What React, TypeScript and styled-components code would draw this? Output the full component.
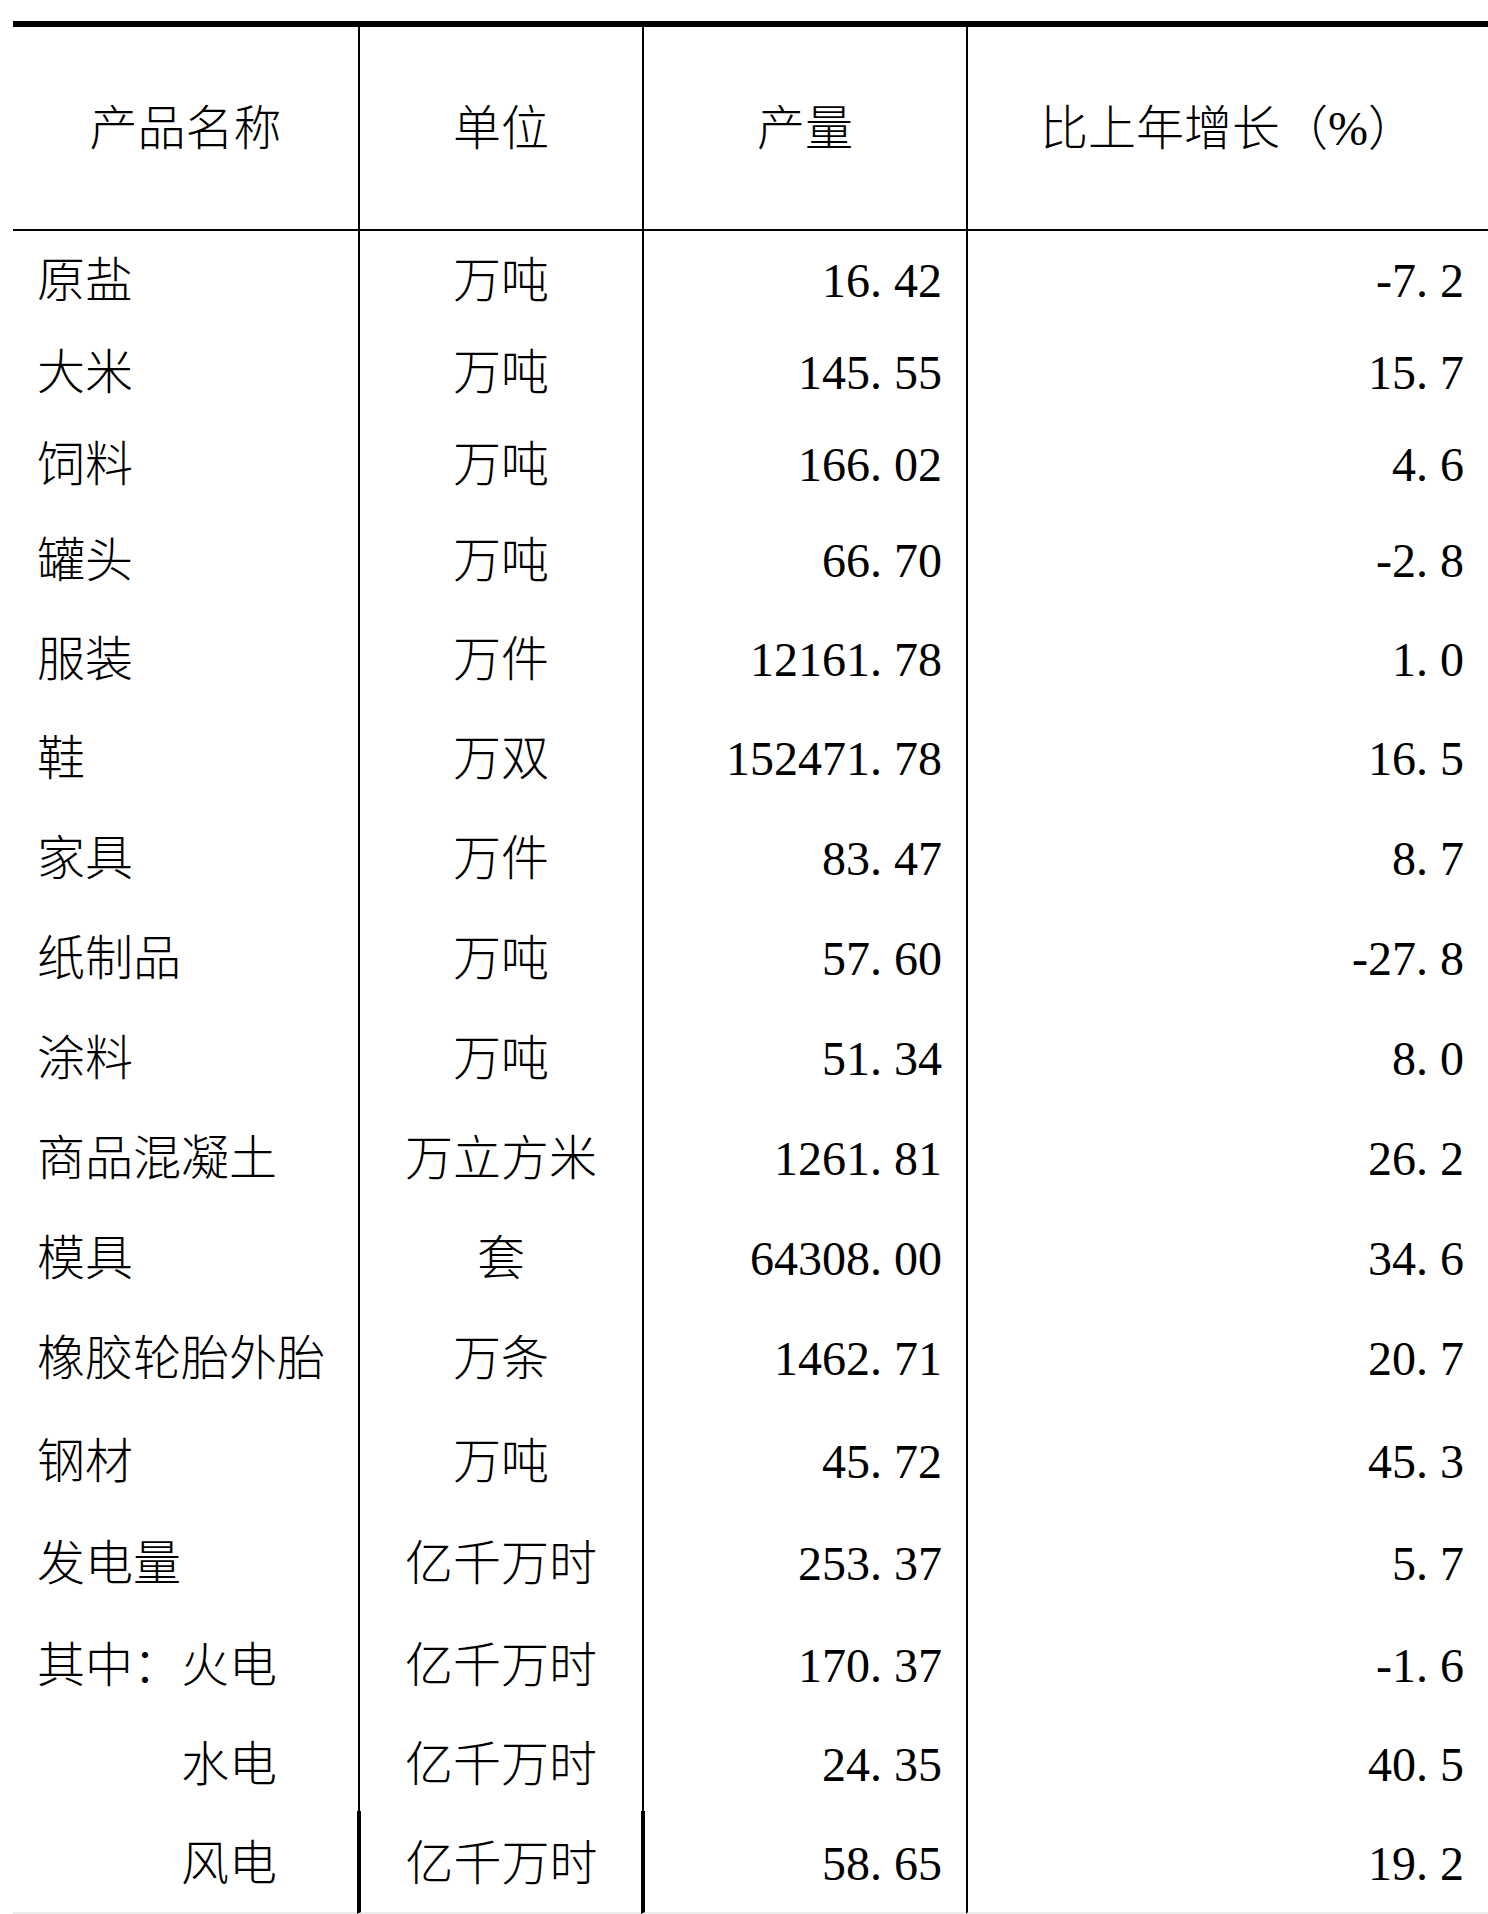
import React from 'react';
import styled, { createGlobalStyle } from 'styled-components';

const GlobalStyle = createGlobalStyle`
  html, body {
    margin: 0;
    padding: 0;
    background: #ffffff;
  }
  body {
    font-family: "Liberation Serif", "Noto Sans CJK SC", serif;
    color: #000000;
  }
`;

const Page = styled.div`
  box-sizing: border-box;
  width: 1488px;
  height: 1914px;
  overflow: hidden;
  padding: 21px 0 0 13px;
`;

const Table = styled.div`
  display: grid;
  grid-template-columns: 345px 284px 324px 522px;
  border-top: 6px solid #000;
  font-size: 48px;
  line-height: 1;
  font-weight: 300;
`;

const HeadCell = styled.div<{ $divider: boolean }>`
  box-sizing: border-box;
  height: 204px;
  display: flex;
  align-items: center;
  justify-content: center;
  padding-top: 2px;
  border-bottom: 2px solid #000;
  border-left: ${(p) => (p.$divider ? '2px solid #000' : 'none')};
  white-space: nowrap;
`;

type Align = 'left' | 'center' | 'right';

const Cell = styled.div<{ $h: number; $align: Align; $divider: boolean; $heavy: boolean; $last: boolean }>`
  box-sizing: border-box;
  height: ${(p) => p.$h}px;
  display: flex;
  align-items: center;
  justify-content: ${(p) =>
    p.$align === 'left' ? 'flex-start' : p.$align === 'right' ? 'flex-end' : 'center'};
  padding: ${(p) => (p.$last ? '0 24px 0 24px' : '0 24px')};
  padding-top: 4px;
  white-space: nowrap;
  border-left: ${(p) => (p.$divider ? `${p.$heavy ? 4 : 2}px solid #000` : 'none')};
  margin-left: ${(p) => (p.$divider && p.$heavy ? '-1px' : '0')};
  border-bottom: ${(p) => (p.$last ? '2px solid #ececec' : 'none')};
`;

const Indent = styled.span`
  padding-left: 3em;
`;

const Dot = styled.span`
  display: inline-block;
  width: 0.5em;
  text-align: left;
`;

const Minus = styled.span`
  display: inline-block;
  width: 0.5em;
  text-align: right;
`;

type Row = {
  name: string;
  indent?: boolean;
  unit: string;
  output: string;
  growth: string;
  h: number;
};

const rows: Row[] = [
  { name: '原盐', unit: '万吨', output: '16.42', growth: '-7.2', h: 95 },
  { name: '大米', unit: '万吨', output: '145.55', growth: '15.7', h: 90 },
  { name: '饲料', unit: '万吨', output: '166.02', growth: '4.6', h: 94 },
  { name: '罐头', unit: '万吨', output: '66.70', growth: '-2.8', h: 98 },
  { name: '服装', unit: '万件', output: '12161.78', growth: '1.0', h: 99 },
  { name: '鞋', unit: '万双', output: '152471.78', growth: '16.5', h: 100 },
  { name: '家具', unit: '万件', output: '83.47', growth: '8.7', h: 100 },
  { name: '纸制品', unit: '万吨', output: '57.60', growth: '-27.8', h: 100 },
  { name: '涂料', unit: '万吨', output: '51.34', growth: '8.0', h: 100 },
  { name: '商品混凝土', unit: '万立方米', output: '1261.81', growth: '26.2', h: 100 },
  { name: '模具', unit: '套', output: '64308.00', growth: '34.6', h: 99 },
  { name: '橡胶轮胎外胎', unit: '万条', output: '1462.71', growth: '20.7', h: 102 },
  { name: '钢材', unit: '万吨', output: '45.72', growth: '45.3', h: 103 },
  { name: '发电量', unit: '亿千万时', output: '253.37', growth: '5.7', h: 102 },
  { name: '其中：火电', unit: '亿千万时', output: '170.37', growth: '-1.6', h: 101 },
  { name: '水电', indent: true, unit: '亿千万时', output: '24.35', growth: '40.5', h: 97 },
  { name: '风电', indent: true, unit: '亿千万时', output: '58.65', growth: '19.2', h: 103 },
];

const Num: React.FC<{ value: string }> = ({ value }) => {
  const neg = value.startsWith('-');
  const body = neg ? value.slice(1) : value;
  const [intPart, frac] = body.split('.');
  return (
    <span>
      {neg && <Minus>-</Minus>}
      {intPart}
      {frac !== undefined && <Dot>.</Dot>}
      {frac}
    </span>
  );
};

export default function App() {
  return (
    <>
      <GlobalStyle />
      <Page>
        <Table>
          <HeadCell $divider={false}>产品名称</HeadCell>
          <HeadCell $divider>单位</HeadCell>
          <HeadCell $divider>产量</HeadCell>
          <HeadCell $divider>比上年增长（%）</HeadCell>
          {rows.map((r, i) => {
            const last = i === rows.length - 1;
            return (
              <React.Fragment key={r.name + i}>
                <Cell $h={r.h} $align="left" $divider={false} $heavy={false} $last={last}>
                  {r.indent ? <Indent>{r.name}</Indent> : r.name}
                </Cell>
                <Cell $h={r.h} $align="center" $divider $heavy={last} $last={last}>
                  {r.unit}
                </Cell>
                <Cell $h={r.h} $align="right" $divider $heavy={last} $last={last}>
                  <Num value={r.output} />
                </Cell>
                <Cell $h={r.h} $align="right" $divider $heavy={false} $last={last}>
                  <Num value={r.growth} />
                </Cell>
              </React.Fragment>
            );
          })}
        </Table>
      </Page>
    </>
  );
}
